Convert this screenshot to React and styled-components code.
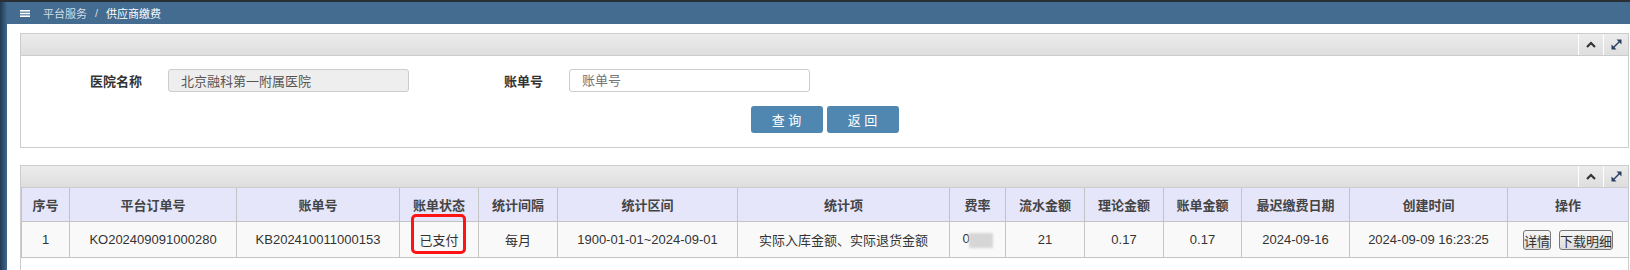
import React from 'react'
import styled, { createGlobalStyle } from 'styled-components'

const GlobalStyle = createGlobalStyle`
    body {
        margin: 0;
        background: #fff;
        overflow: hidden;
        font-family: "Liberation Sans", Arial, "Noto Sans CJK SC", sans-serif;
        font-size: 13px;
        color: #333;
    }
`

const Page = styled.div`
    display: flex;
    height: 270px;
    border-top: 2px solid #2a2f35;
    box-sizing: border-box;
    overflow: hidden;
`

const SideEdge = styled.div`
    width: 7px;
    flex-shrink: 0;
    background: linear-gradient(to right, #22394f, #2f5170 50%, #3f6a8f);
`

const Main = styled.div`
    flex: 1;
    display: flex;
    flex-direction: column;
    min-width: 0;
    overflow: hidden;
`

const TopBar = styled.div`
    height: 22px;
    flex-shrink: 0;
    display: flex;
    align-items: center;
    padding-left: 13px;
    background: #436c90;
    font-size: 11px;
    color: #d3dde7;
`

const MenuIcon = styled.svg`
    margin-right: 13px;
`

const Crumb = styled.span`
    color: ${props => (props.current ? '#fff' : '#d3dde7')};
`

const CrumbSep = styled.span`
    margin: 0 8px;
`

const Content = styled.div`
    flex-shrink: 0;
    padding: 9px 1px 0 13px;
`

const Panel = styled.div`
    border: 1px solid #ccc;
    background: #fff;
    margin-bottom: 17px;
`

const PanelHeader = styled.div`
    height: 21px;
    display: flex;
    justify-content: flex-end;
    background: linear-gradient(#ececec, #dedede);
    border-bottom: 1px solid #ccc;
`

const HeaderTool = styled.div`
    width: 24px;
    display: flex;
    align-items: center;
    justify-content: center;
    border-left: 1px solid #fff;
`

const FormBody = styled.div`
    padding: 13px 0 14px;
`

const FormRow = styled.div`
    display: flex;
    align-items: center;
    gap: 13px;
`

const Field = styled.div`
    display: flex;
    align-items: center;
`

const Label = styled.label`
    width: 121px;
    margin-right: 26px;
    text-align: right;
    font-weight: bold;
    color: #333;
`

const TextInput = styled.input`
    width: 241px;
    height: 23px;
    box-sizing: border-box;
    padding: 0 12px;
    border: 1px solid #ccc;
    border-radius: 3px;
    font: inherit;
    color: #555;
    background: ${props => (props.disabled ? '#eee' : '#fff')};

    ::placeholder {
        color: #999;
    }
`

const ButtonRow = styled.div`
    display: flex;
    justify-content: center;
    gap: 4px;
    margin-top: 14px;
`

const BlueButton = styled.button`
    width: 72px;
    height: 27px;
    border: none;
    border-radius: 3px;
    background: #5087b1;
    color: #fff;
    font: inherit;
    font-size: 13px;
    white-space: pre;
`

const TableBody = styled.div`
    padding-bottom: 14px;
`

const Table = styled.table`
    width: 100%;
    table-layout: fixed;
    border-collapse: collapse;
`

const Th = styled.th`
    height: 33px;
    padding: 0;
    border: 1px solid #c4c4c4;
    border-top: none;
    background: #e6e6fa;
    color: #444;
    font-weight: bold;
`

const Td = styled.td`
    position: relative;
    height: 35px;
    padding: 0;
    border: 1px solid #c4c4c4;
    background: #f9f9f9;
    text-align: center;
    color: #333;
`

const Highlight = styled.div`
    position: absolute;
    left: 11px;
    top: -8px;
    width: 55px;
    height: 40px;
    box-sizing: border-box;
    border: 3px solid #ff1414;
    border-radius: 5px;
`

const Blurred = styled.span`
    display: inline-block;
    width: 24px;
    height: 15px;
    margin-left: -1px;
    vertical-align: middle;
    background: #d6d6d6;
    filter: blur(1.2px);
`

const RowButton = styled.button`
    height: 20px;
    padding: 0;
    margin: 0 4px;
    border: 1px solid #777;
    border-radius: 3px;
    background: linear-gradient(#f6f6f6, #dcdcdc);
    font: inherit;
    color: #333;
`

const ChevronUp = () => (
    <svg width="10" height="7" viewBox="0 0 10 7">
        <path d="M1 6 L5 2 L9 6" fill="none" stroke="#333" strokeWidth="2.2" />
    </svg>
)

const ExpandIcon = () => (
    <svg width="11" height="11" viewBox="0 0 11 11">
        <line x1="2.5" y1="8.5" x2="8.5" y2="2.5" stroke="#27405f" strokeWidth="1.4" />
        <polygon points="10.5,0.5 10.5,5.5 5.5,0.5" fill="#27405f" />
        <polygon points="0.5,10.5 0.5,5.5 5.5,10.5" fill="#27405f" />
    </svg>
)

const PanelTools = () => (
    <PanelHeader>
        <HeaderTool>
            <ChevronUp />
        </HeaderTool>
        <HeaderTool>
            <ExpandIcon />
        </HeaderTool>
    </PanelHeader>
)

const columns = [
    ['序号', 48],
    ['平台订单号', 167],
    ['账单号', 163],
    ['账单状态', 79],
    ['统计间隔', 79],
    ['统计区间', 180],
    ['统计项', 212],
    ['费率', 56],
    ['流水金额', 79],
    ['理论金额', 79],
    ['账单金额', 78],
    ['最迟缴费日期', 108],
    ['创建时间', 158],
    ['操作', 121]
]

const App = () => (
    <Page>
        <GlobalStyle />
        <SideEdge />
        <Main>
            <TopBar>
                <MenuIcon width="10" height="7" viewBox="0 0 10 7">
                    <rect x="0" y="0" width="10" height="1.6" fill="#fff" />
                    <rect x="0" y="2.7" width="10" height="1.6" fill="#fff" />
                    <rect x="0" y="5.4" width="10" height="1.6" fill="#fff" />
                </MenuIcon>
                <Crumb>平台服务</Crumb>
                <CrumbSep>/</CrumbSep>
                <Crumb current>供应商缴费</Crumb>
            </TopBar>
            <Content>
                <Panel>
                    <PanelTools />
                    <FormBody>
                        <FormRow>
                            <Field>
                                <Label>医院名称</Label>
                                <TextInput disabled value="北京融科第一附属医院" readOnly />
                            </Field>
                            <Field>
                                <Label>账单号</Label>
                                <TextInput placeholder="账单号" />
                            </Field>
                        </FormRow>
                        <ButtonRow>
                            <BlueButton>查 询</BlueButton>
                            <BlueButton>返 回</BlueButton>
                        </ButtonRow>
                    </FormBody>
                </Panel>
                <Panel>
                    <PanelTools />
                    <TableBody>
                        <Table>
                            <colgroup>
                                {columns.map(([name, width]) => (
                                    <col key={name} style={{ width }} />
                                ))}
                            </colgroup>
                            <thead>
                                <tr>
                                    {columns.map(([name]) => (
                                        <Th key={name}>{name}</Th>
                                    ))}
                                </tr>
                            </thead>
                            <tbody>
                                <tr>
                                    <Td>1</Td>
                                    <Td>KO202409091000280</Td>
                                    <Td>KB202410011000153</Td>
                                    <Td>
                                        已支付
                                        <Highlight />
                                    </Td>
                                    <Td>每月</Td>
                                    <Td>1900-01-01~2024-09-01</Td>
                                    <Td>实际入库金额、实际退货金额</Td>
                                    <Td>
                                        0<Blurred />
                                    </Td>
                                    <Td>21</Td>
                                    <Td>0.17</Td>
                                    <Td>0.17</Td>
                                    <Td>2024-09-16</Td>
                                    <Td>2024-09-09 16:23:25</Td>
                                    <Td>
                                        <RowButton>详情</RowButton>
                                        <RowButton>下载明细</RowButton>
                                    </Td>
                                </tr>
                            </tbody>
                        </Table>
                    </TableBody>
                </Panel>
            </Content>
        </Main>
    </Page>
)

export default App
